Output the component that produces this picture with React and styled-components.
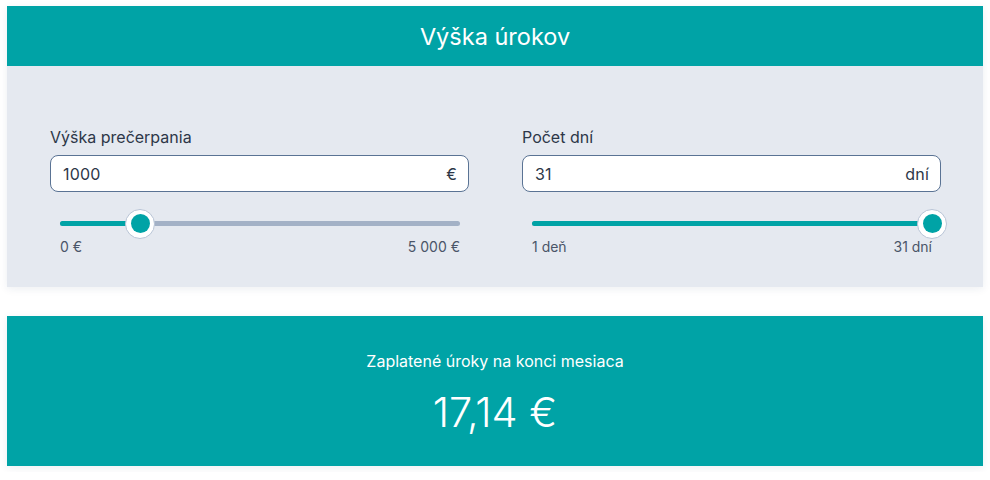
import styled, { createGlobalStyle } from "styled-components";

const GlobalStyle = createGlobalStyle`
  body {
    margin: 0;
    background: #ffffff;
    font-family: Inter, "Noto Sans", sans-serif;
  }
`;

const Page = styled.div`
  padding: 6px 7px;
  display: flex;
  flex-direction: column;
  gap: 29px;
`;

const Card = styled.section`
  box-shadow: 0 2px 8px rgba(30, 50, 90, 0.08);
`;

const Header = styled.h1`
  margin: 0;
  height: 60px;
  display: flex;
  align-items: center;
  justify-content: center;
  background: #00a3a6;
  color: #ffffff;
  font-size: 23.5px;
  font-weight: 400;
`;

const Panel = styled.div`
  background: #e5e9f0;
  padding: 62px 42px 32px 43px;
  display: grid;
  grid-template-columns: 1fr 1fr;
  column-gap: 53px;
`;

const Field = styled.div`
  display: flex;
  flex-direction: column;
`;

const Label = styled.label`
  font-size: 16px;
  color: #2d3748;
  line-height: 19px;
  margin-bottom: 8px;
`;

const InputBox = styled.div`
  height: 37px;
  box-sizing: border-box;
  border: 1px solid #5a7394;
  border-radius: 8px;
  background: #ffffff;
  display: flex;
  align-items: center;
  padding: 0 11px 0 12px;
  font-size: 16px;
  letter-spacing: 0.2px;
  color: #2d3748;
`;

const Value = styled.span`
  flex: 1;
`;

const Suffix = styled.span`
  color: #2d3748;
`;

const SliderWrap = styled.div`
  padding: 0 9px 0 10px;
  margin-top: 17px;
`;

const Track = styled.div`
  position: relative;
  height: 5px;
  border-radius: 3px;
  background: #a3b1c6;
  margin: 12px 0;
`;

const Fill = styled.div`
  height: 100%;
  border-radius: 3px;
  background: #00a3a6;
`;

const Thumb = styled.div`
  position: absolute;
  top: 50%;
  width: 30px;
  height: 30px;
  box-sizing: border-box;
  transform: translate(-50%, -50%);
  border-radius: 50%;
  background: #ffffff;
  border: 1px solid #b8c4d6;
  display: flex;
  align-items: center;
  justify-content: center;

  &::after {
    content: "";
    width: 19px;
    height: 19px;
    border-radius: 50%;
    background: #00a3a6;
  }
`;

const Range = styled.div`
  display: flex;
  justify-content: space-between;
  font-size: 14px;
  color: #4a5568;
  margin-top: 4px;
`;

const Result = styled.section`
  background: #00a3a6;
  height: 150px;
  display: flex;
  flex-direction: column;
  align-items: center;
  justify-content: center;
  color: #ffffff;
  box-shadow: 0 2px 8px rgba(30, 50, 90, 0.08);
`;

const ResultLabel = styled.div`
  font-size: 16px;
  margin-top: 5px;
`;

const ResultValue = styled.div`
  font-size: 41.5px;
  font-weight: 300;
  margin-top: 16px;
`;

function Slider({ percent, min, max }) {
  return (
    <SliderWrap>
      <Track>
        <Fill style={{ width: `${percent}%` }} />
        <Thumb style={{ left: `${percent}%` }} />
      </Track>
      <Range>
        <span>{min}</span>
        <span>{max}</span>
      </Range>
    </SliderWrap>
  );
}

export default function App() {
  return (
    <>
      <GlobalStyle />
      <Page>
        <Card>
          <Header>Výška úrokov</Header>
          <Panel>
            <Field>
              <Label>Výška prečerpania</Label>
              <InputBox>
                <Value>1000</Value>
                <Suffix>€</Suffix>
              </InputBox>
              <Slider percent={20} min="0 €" max="5 000 €" />
            </Field>
            <Field>
              <Label>Počet dní</Label>
              <InputBox>
                <Value>31</Value>
                <Suffix>dní</Suffix>
              </InputBox>
              <Slider percent={100} min="1 deň" max="31 dní" />
            </Field>
          </Panel>
        </Card>
        <Result>
          <ResultLabel>Zaplatené úroky na konci mesiaca</ResultLabel>
          <ResultValue>17,14 €</ResultValue>
        </Result>
      </Page>
    </>
  );
}
